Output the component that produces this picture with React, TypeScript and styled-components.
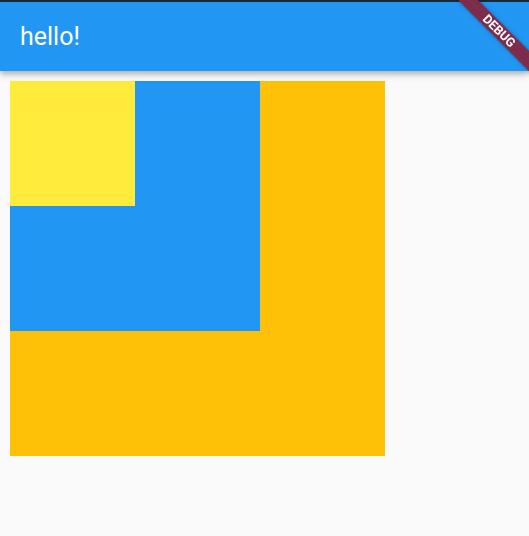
import React from 'react';
import styled, { createGlobalStyle } from 'styled-components';

const GlobalStyle = createGlobalStyle`
  html, body {
    margin: 0;
    padding: 0;
    background: #fafafa;
    font-family: Roboto, "Liberation Sans", sans-serif;
    overflow: hidden;
  }
`;

const Screen = styled.div`
  width: 529px;
  height: 536px;
  display: flex;
  flex-direction: column;
  background: #fafafa;
`;

const AppBar = styled.header`
  height: 69px;
  border-top: 2px solid #1b2935;
  background: #2196f3;
  display: flex;
  align-items: center;
  padding-left: 20px;
  color: #fff;
  font-size: 25px;
  box-shadow: 0 2px 5px rgba(0, 0, 0, 0.22), 0 5px 7px rgba(0, 0, 0, 0.12);
  position: relative;
  z-index: 1;
`;

const Title = styled.h1`
  margin: 0;
  font-size: 25px;
  font-weight: 400;
  margin-top: -1px;
`;

const Body = styled.main`
  padding: 10px;
  display: flex;
  align-items: flex-start;
`;

const Square = styled.div<{ $size: number; $color: string }>`
  width: ${(p) => p.$size}px;
  height: ${(p) => p.$size}px;
  background: ${(p) => p.$color};
  display: flex;
  align-items: flex-start;
  justify-content: flex-start;
`;

// debug ribbon sits over the app bar corner
const BannerCorner = styled.div`
  position: fixed;
  top: 0;
  right: 0;
  width: 100px;
  height: 100px;
  overflow: hidden;
  pointer-events: none;
  z-index: 2;
`;

const Banner = styled.div`
  position: absolute;
  left: 10px;
  top: 23.5px;
  width: 120px;
  height: 14px;
  transform: rotate(45deg);
  background: #7d2c4c;
  box-shadow: 0 0 4px rgba(0, 0, 0, 0.35);
  color: #fff;
  font-family: Roboto, "Liberation Sans", sans-serif;
  font-weight: 700;
  font-size: 12.5px;
  line-height: 14px;
  display: flex;
  align-items: center;
  justify-content: center;
`;

export default function App() {
  return (
    <Screen>
      <GlobalStyle />
      <AppBar>
        <Title>hello!</Title>
      </AppBar>
      <Body>
        <Square $size={375} $color="#ffc107">
          <Square $size={250} $color="#2196f3">
            <Square $size={125} $color="#ffeb3b" />
          </Square>
        </Square>
      </Body>
      <BannerCorner>
        <Banner>DEBUG</Banner>
      </BannerCorner>
    </Screen>
  );
}
